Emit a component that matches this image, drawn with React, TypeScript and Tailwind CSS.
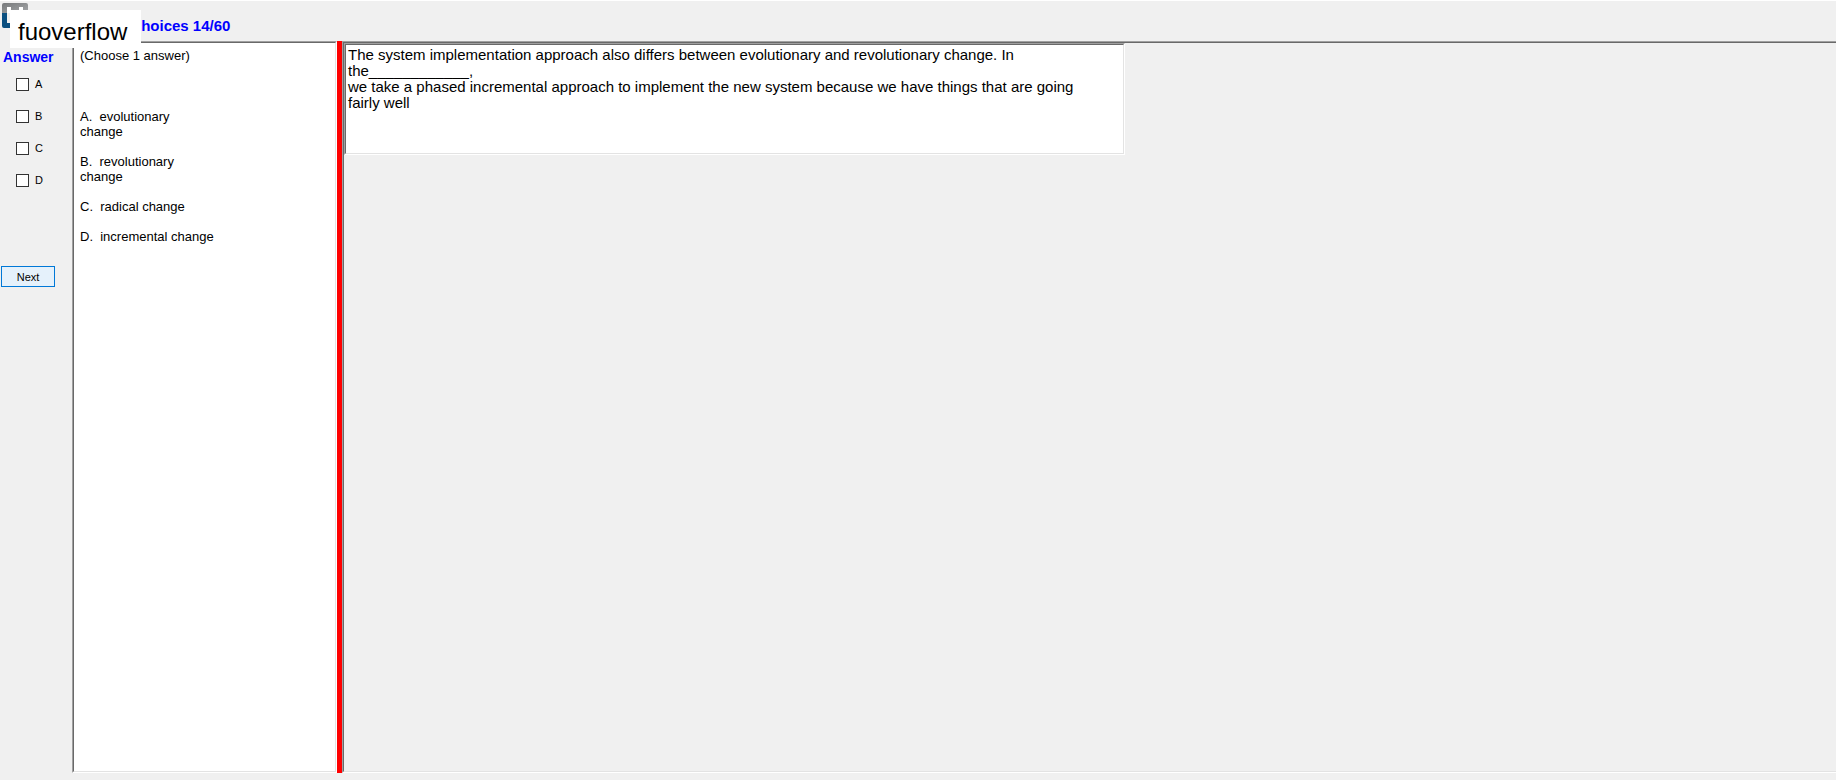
import type { ReactNode } from "react";

const answers = ["A", "B", "C", "D"];

const choices = [
  "A.  evolutionary\nchange",
  "B.  revolutionary\nchange",
  "C.  radical change",
  "D.  incremental change",
];

function Sunken({ className, inner, children }: { className: string; inner: string; children: ReactNode }) {
  return (
    <div className={`flex border border-t-[#a0a0a0] border-l-[#a0a0a0] border-r-white border-b-white ${className}`}>
      <div
        className={`min-w-0 grow border border-t-[#696969] border-l-[#696969] border-r-[#e3e3e3] border-b-[#e3e3e3] ${inner}`}
      >
        {children}
      </div>
    </div>
  );
}

function Logo() {
  return (
    <svg width="26" height="26" viewBox="0 0 26 26" aria-hidden="true">
      <defs>
        <linearGradient id="metal" x1="0" y1="0" x2="1" y2="1">
          <stop offset="0" stopColor="#77797b" />
          <stop offset="1" stopColor="#a6a8aa" />
        </linearGradient>
      </defs>
      <path d="M2 0h22q2 0 2 2v8h-5V4h-4v6H9V4H5v6H0V2q0-2 2-2z" fill="url(#metal)" />
      <path d="M0 10h5v10h16V10h5v13q0 2-2 2H2q-2 0-2-2z" fill="#0b4f80" />
      <path d="M5 4h4v6H5zM17 4h4v6h-4z" fill="#ffffff" />
    </svg>
  );
}

export default function App() {
  return (
    <div className="relative flex min-h-screen flex-col border-t border-white bg-[#f0f0f0] pb-[7px] font-['Liberation_Sans',Arial,sans-serif] text-black">
      <header className="flex h-10 items-start pt-[2px] pl-[2px]">
        <Logo />
        <h1 className="mt-[15px] ml-11 text-[15px] leading-4 font-bold whitespace-nowrap text-[#0000ff]">
          Multiple choices 14/60
        </h1>
      </header>

      <div className="absolute top-[9px] left-[10px] flex h-[38px] w-[131px] items-center bg-white pt-[6px] pl-2 text-2xl">
        fuoverflow
      </div>

      <main className="flex grow">
        <form className="flex w-[72px] shrink-0 flex-col items-start">
          <fieldset className="flex flex-col">
            <legend className="pt-2 pl-[3px] text-[14px] leading-4 font-bold text-[#0000ff]">Answer</legend>
            <div className="flex flex-col gap-4 pt-[11px] pl-4">
              {answers.map((a) => (
                <label key={a} className="flex h-4 items-center gap-[6px] text-[11px] leading-4">
                  <input
                    type="checkbox"
                    name={a}
                    className="size-[13px] appearance-none border border-[#333333] bg-white checked:bg-[#333333]"
                  />
                  {a}
                </label>
              ))}
            </div>
          </fieldset>
          <button
            type="button"
            className="mt-[78px] ml-px h-[21px] w-[54px] border border-[#0078d7] bg-[#e5f1fb] text-[11px] leading-4"
          >
            Next
          </button>
        </form>

        <Sunken className="w-[265px] shrink-0" inner="bg-white pt-[5px] pl-[6px] text-[13px] leading-[15px]">
          <p className="mb-[46px]">(Choose 1 answer)</p>
          <ul className="flex flex-col gap-[15px]">
            {choices.map((c) => (
              <li key={c} className="whitespace-pre">
                {c}
              </li>
            ))}
          </ul>
        </Sunken>

        <div className="w-[5px] shrink-0 bg-[#ff0000]" />

        <section className="flex min-w-0 grow border-y border-l border-t-[#a0a0a0] border-b-white border-l-[#a0a0a0]">
          <div className="flex min-w-0 grow items-start border-y border-l border-t-[#696969] border-b-[#e3e3e3] border-l-[#696969]">
            <Sunken className="h-[112px] w-full max-w-[781px]" inner="bg-white pt-[2px] pl-[2px] text-[15px] leading-4">
              <p>
                The system implementation approach also differs between evolutionary and revolutionary change. In
                <br />
                the____________,
                <br />
                we take a phased incremental approach to implement the new system because we have things that are going
                <br />
                fairly well
              </p>
            </Sunken>
          </div>
        </section>
      </main>
    </div>
  );
}
